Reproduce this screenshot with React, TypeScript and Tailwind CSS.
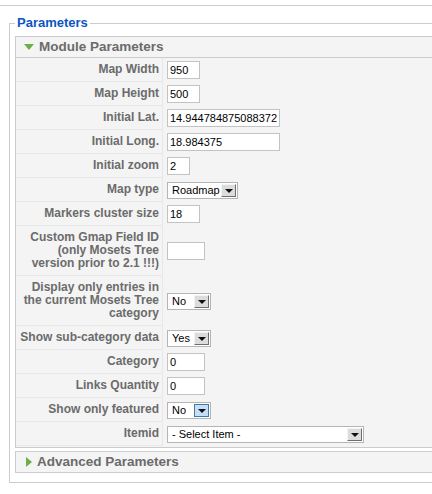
const rows = [
  { label: ['Map Width'], kind: 'input', w: 'w-[33px]', value: '950' },
  { label: ['Map Height'], kind: 'input', w: 'w-[33px]', value: '500' },
  { label: ['Initial Lat.'], kind: 'input', w: 'w-[113px]', value: '14.944784875088372' },
  { label: ['Initial Long.'], kind: 'input', w: 'w-[113px]', value: '18.984375' },
  { label: ['Initial zoom'], kind: 'input', w: 'w-[23px]', value: '2' },
  { label: ['Map type'], kind: 'select', w: 'w-[71px]', value: 'Roadmap' },
  { label: ['Markers cluster size'], kind: 'input', w: 'w-[33px]', value: '18' },
  {
    label: ['Custom Gmap Field ID', '(only Mosets Tree', 'version prior to 2.1 !!!)'],
    kind: 'input',
    w: 'w-[38px]',
    value: '',
  },
  {
    label: ['Display only entries in', 'the current Mosets Tree', 'category'],
    kind: 'select',
    w: 'w-[44px]',
    value: 'No',
  },
  { label: ['Show sub-category data'], kind: 'select', w: 'w-[44px]', value: 'Yes' },
  { label: ['Category'], kind: 'input', w: 'w-[38px]', value: '0' },
  { label: ['Links Quantity'], kind: 'input', w: 'w-[38px]', value: '0' },
  { label: ['Show only featured'], kind: 'select', w: 'w-[44px]', value: 'No', active: true },
  { label: ['Itemid'], kind: 'select', w: 'w-[197px]', value: '- Select Item -' },
];

function TextBox({ w, value }: any) {
  return (
    <div className={`${w} h-[18px] bg-white border border-[#c3c3c3] px-[2px] text-[11px] leading-[16px] text-black whitespace-nowrap overflow-hidden`}>
      {value}
    </div>
  );
}

function DropDown({ w, value, active }: any) {
  return (
    <div className={`${w} h-[17px] bg-white border border-[#b5b5b5] flex items-center justify-between pl-[4px] pr-[1px]`}>
      <span className="text-[11px] leading-[15px] text-black whitespace-nowrap">{value}</span>
      <span
        className={
          active
            ? 'w-[15px] h-[13px] flex items-center justify-center bg-[#c5dff6] border border-[#3d7bad]'
            : 'w-[15px] h-[13px] flex items-center justify-center bg-[#dcdcdc] border border-t-[#f4f4f4] border-l-[#f4f4f4] border-r-[#6f6f6f] border-b-[#6f6f6f]'
        }
      >
        <span className="w-0 h-0 border-l-[4px] border-r-[4px] border-t-[4px] border-l-transparent border-r-transparent border-t-[#111] mt-[2px]" />
      </span>
    </div>
  );
}

function PanelHeader({ title, open }: any) {
  return (
    <div className="h-[20px] flex items-center gap-[5px] pl-[8px] bg-[#f4f4f4]">
      {open ? (
        <span className="w-0 h-0 border-l-[5px] border-r-[5px] border-t-[6px] border-l-transparent border-r-transparent border-t-[#6dae4b]" />
      ) : (
        <span className="w-0 h-0 border-t-[5px] border-b-[5px] border-l-[6px] border-t-transparent border-b-transparent border-l-[#6dae4b] ml-[2px]" />
      )}
      <span className="text-[13.5px] font-bold text-[#6b6b6b] leading-[20px]">{title}</span>
    </div>
  );
}

export default function App() {
  return (
    <div className="w-[432px] h-[494px] overflow-hidden bg-white" style={{ fontFamily: '"Liberation Sans", Arial, sans-serif' }}>
      <div className="mt-[5px] border-t border-[#cccccc]" />
      <fieldset className="ml-[9px] mt-[9px] w-[460px] border border-[#cccccc] px-[5px] pb-[9px]">
        <legend className="px-[2px] text-[13px] font-bold text-[#0b55c4] leading-[16px]">Parameters</legend>
        <div className="mt-[5px] border border-[#cccccc]">
          <PanelHeader title="Module Parameters" open />
          <div className="border-t border-[#cccccc] bg-[#f4f4f4] pb-[1px]">
            {rows.map((r, i) => (
              <div key={i} className="flex">
                <div className="w-[147px] shrink-0 border-b border-r border-[#e8e8e8] py-[5px] pr-[3px] text-right text-[12px] font-bold leading-[13px] text-[#6b6b6b] whitespace-nowrap">
                  {r.label.map((l, j) => (
                    <div key={j}>{l}</div>
                  ))}
                </div>
                <div className="flex items-center pl-[4px]">
                  {r.kind === 'input' ? (
                    <TextBox w={r.w} value={r.value} />
                  ) : (
                    <DropDown w={r.w} value={r.value} active={r.active} />
                  )}
                </div>
              </div>
            ))}
          </div>
        </div>
        <div className="mt-[3px] border border-[#cccccc]">
          <PanelHeader title="Advanced Parameters" />
        </div>
      </fieldset>
    </div>
  );
}
